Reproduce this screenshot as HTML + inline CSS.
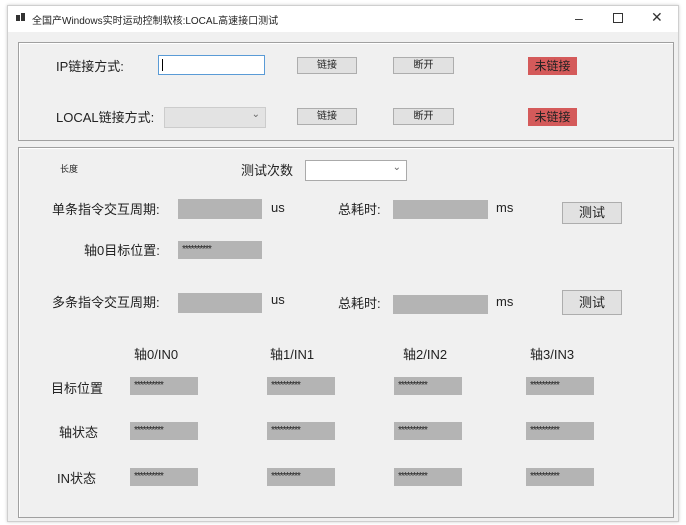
<!DOCTYPE html>
<html><head><meta charset="utf-8"><style>
*{margin:0;padding:0;box-sizing:border-box}
body{width:686px;height:525px;background:#fff;position:relative;overflow:hidden;font-family:"Liberation Sans","Noto Sans CJK SC",sans-serif;color:#222}
.a{position:absolute;white-space:nowrap}
.win{position:absolute;left:7px;top:5px;width:672px;height:517px;border:1px solid #cfcfcf;background:#f0f0f0;box-shadow:0 0 3px #ccc}
.tb{position:absolute;left:8px;top:6px;width:670px;height:26px;background:#fff}
.grp{position:absolute;border:1px solid #a0a0a0;box-shadow:inset 1px 1px 0 #fff}
.btn{position:absolute;background:#e1e1e1;border:1px solid #adadad;font-size:10px;text-align:center;color:#222}
.red{position:absolute;background:#d45a5a;color:#222;font-size:12px;text-align:center;line-height:18px}
.gb{position:absolute;background:#b4b4b4;font-size:10px;line-height:17px;padding-left:4px;color:#222;letter-spacing:-1px}
.l{font-size:13px;margin-top:-2px}
</style></head><body>
<div class="win"></div>
<div class="tb"></div>
<div class="a" style="left:16px;top:15px;width:4px;height:6px;background:#333"></div>
<div class="a" style="left:21px;top:13px;width:4px;height:8px;background:#333"></div>
<div class="a" style="left:32px;top:12px;font-size:10px">全国产Windows实时运动控制软核:LOCAL高速接口测试</div>
<div class="a" style="left:575px;top:10px;font-size:14px;color:#333">–</div>
<div class="a" style="left:613px;top:13px;width:10px;height:10px;border:1px solid #333"></div>
<div class="a" style="left:651px;top:9px;font-size:14px;color:#333">✕</div>

<div class="grp" style="left:18px;top:42px;width:656px;height:99px"></div>
<div class="a l" style="left:56px;top:58px">IP链接方式:</div>
<div class="a" style="left:158px;top:55px;width:107px;height:20px;background:#fff;border:1px solid #5a9bd6"><div style="position:absolute;left:3px;top:3px;width:1px;height:12px;background:#000"></div></div>
<div class="btn" style="left:297px;top:57px;width:60px;height:17px;line-height:15px">链接</div>
<div class="btn" style="left:393px;top:57px;width:61px;height:17px;line-height:15px">断开</div>
<div class="red" style="left:528px;top:57px;width:49px;height:18px">未链接</div>
<div class="a l" style="left:56px;top:109px">LOCAL链接方式:</div>
<div class="a" style="left:164px;top:107px;width:102px;height:21px;background:#e3e3e3;border:1px solid #ccc"><span style="position:absolute;right:5px;top:1px;font-size:10px;color:#666">⌄</span></div>
<div class="btn" style="left:297px;top:108px;width:60px;height:17px;line-height:15px">链接</div>
<div class="btn" style="left:393px;top:108px;width:61px;height:17px;line-height:15px">断开</div>
<div class="red" style="left:528px;top:108px;width:49px;height:18px">未链接</div>

<div class="grp" style="left:18px;top:147px;width:656px;height:371px"></div>
<div class="a" style="left:60px;top:162px;font-size:9px">长度</div>
<div class="a l" style="left:241px;top:162px">测试次数</div>
<div class="a" style="left:305px;top:160px;width:102px;height:21px;background:#fff;border:1px solid #aaa"><span style="position:absolute;right:5px;top:1px;font-size:10px;color:#666">⌄</span></div>

<div class="a l" style="left:52px;top:201px">单条指令交互周期:</div>
<div class="gb" style="left:178px;top:199px;width:84px;height:20px"></div>
<div class="a l" style="left:271px;top:202px">us</div>
<div class="a l" style="left:338px;top:201px">总耗时:</div>
<div class="gb" style="left:393px;top:200px;width:95px;height:19px"></div>
<div class="a l" style="left:496px;top:202px">ms</div>
<div class="btn" style="left:562px;top:202px;width:60px;height:22px;line-height:20px;font-size:13px">测试</div>

<div class="a l" style="left:84px;top:242px">轴0目标位置:</div>
<div class="gb" style="left:178px;top:241px;width:84px;height:18px">**********</div>

<div class="a l" style="left:52px;top:294px">多条指令交互周期:</div>
<div class="gb" style="left:178px;top:293px;width:84px;height:20px"></div>
<div class="a l" style="left:271px;top:294px">us</div>
<div class="a l" style="left:338px;top:295px">总耗时:</div>
<div class="gb" style="left:393px;top:295px;width:95px;height:19px"></div>
<div class="a l" style="left:496px;top:296px">ms</div>
<div class="btn" style="left:562px;top:290px;width:60px;height:25px;line-height:23px;font-size:13px">测试</div>

<div class="a l" style="left:134px;top:346px">轴0/IN0</div>
<div class="a l" style="left:270px;top:346px">轴1/IN1</div>
<div class="a l" style="left:403px;top:346px">轴2/IN2</div>
<div class="a l" style="left:530px;top:346px">轴3/IN3</div>

<div class="a l" style="left:51px;top:380px">目标位置</div>
<div class="a l" style="left:59px;top:424px">轴状态</div>
<div class="a l" style="left:57px;top:470px">IN状态</div>

<div class="gb" style="left:130px;top:377px;width:68px;height:18px">**********</div>
<div class="gb" style="left:267px;top:377px;width:68px;height:18px">**********</div>
<div class="gb" style="left:394px;top:377px;width:68px;height:18px">**********</div>
<div class="gb" style="left:526px;top:377px;width:68px;height:18px">**********</div>
<div class="gb" style="left:130px;top:422px;width:68px;height:18px">**********</div>
<div class="gb" style="left:267px;top:422px;width:68px;height:18px">**********</div>
<div class="gb" style="left:394px;top:422px;width:68px;height:18px">**********</div>
<div class="gb" style="left:526px;top:422px;width:68px;height:18px">**********</div>
<div class="gb" style="left:130px;top:468px;width:68px;height:18px">**********</div>
<div class="gb" style="left:267px;top:468px;width:68px;height:18px">**********</div>
<div class="gb" style="left:394px;top:468px;width:68px;height:18px">**********</div>
<div class="gb" style="left:526px;top:468px;width:68px;height:18px">**********</div>
</body></html>
